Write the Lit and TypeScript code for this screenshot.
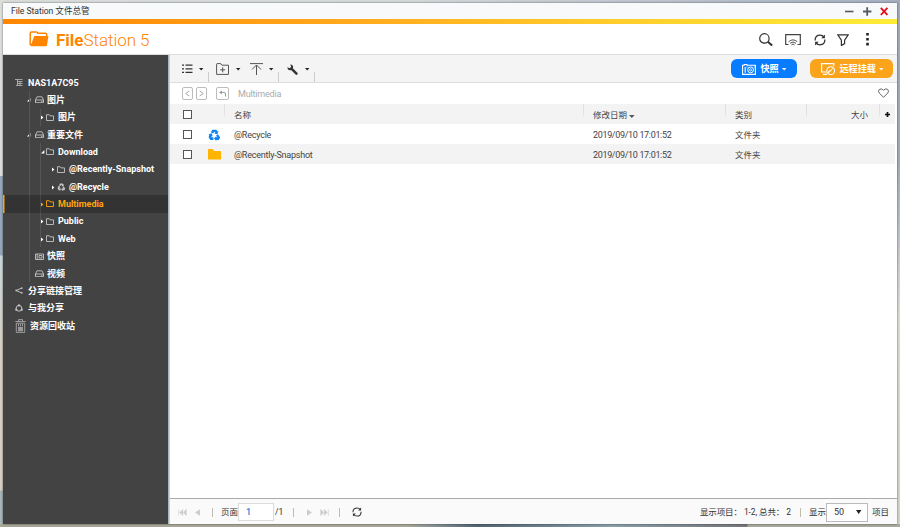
import { LitElement, html, svg, css } from "lit";
import { customElement } from "lit/decorators.js";
import { classMap } from "lit/directives/class-map.js";

const icons: Record<string, any> = {
  brand: svg`<path d="M1.2 14V2.6Q1.2 1 2.8 1h4.6q1 0 1.4 1.2h7.4q1.5 0 1.5 1.5V5" fill="none" stroke="#ff8500" stroke-width="1.5"/><path d="M5.2 5H19.4L18 14.3Q17.8 15.2 17 15.2H2.2Q1 15.2 1.2 13.8L2.6 12.5Z" fill="#ff8500"/>`,
  nas: svg`<path d="M0 .5H7.5M2 2.5H7.5M2 4.5H7.5M1 6.5H7.5M2.5 .5V6.5M5 2.5V6.5" stroke="#bbb" stroke-width=".8" fill="none"/>`,
  disk: svg`<path d="M.5 6.5V4L2 .8H7L8.5 4V6.7H.5V4H8.5M6 5.4H7.5" fill="none" stroke="#c4c4c4" stroke-width=".9"/>`,
  folder: svg`<path d="M.5 6.5V.7H3.2L4 1.9H7.5V6.5Z" fill="none" stroke="currentColor" stroke-width=".9"/>`,
  cam: svg`<path d="M.5 6.5V1H8.5V6.5ZM2.2 1V6.5M4 2.5H7V5H4Z" fill="none" stroke="#c4c4c4" stroke-width=".9"/>`,
  share: svg`<path d="M6.8 1L1.2 3.5L6.8 6" fill="none" stroke="#ccc" stroke-width=".9"/><path d="M6 .4h1.6v1.4H6zM.4 2.8H2v1.4H.4zM6 5.2h1.6v1.4H6z" fill="#ccc"/>`,
  shared: svg`<circle cx="4" cy="4.3" r="2.9" fill="none" stroke="#ccc" stroke-width=".9"/><circle cx="4" cy="1.4" r="1.1" fill="#ccc"/><circle cx="1.3" cy="5.7" r="1.1" fill="#ccc"/><circle cx="6.7" cy="5.7" r="1.1" fill="#ccc"/>`,
  trash: svg`<path d="M.3 2.5H10.7M3.5 2.3V.6H7.5V2.3M1.3 4.2H9.7V13.4H1.3ZM3.5 4.8V7.2M5.5 4.8V7.2M7.5 4.8V7.2" fill="none" stroke="#a6a6a6" stroke-width=".9"/><path d="M3 7.8H8V12.3H3Z" fill="#999"/>`,
  recycle: svg`<path d="M4.6 .8H9L10.3 2.9L11.5 2.3L10.2 6L6.6 5.1L7.9 4.4L6.9 2.9L5.5 5L2.8 3.6ZM10.9 5.9L13.4 9.6L11.7 12.3H9V13.4L6.4 10.8L9 8.2V9.4H10.3L8.7 7.2ZM1.2 6.4L.3 5.8L3.8 4.9L5 8.4L3.9 7.9L3.3 9.4H5.8V12.3H2.3L.4 9.4Z" fill="currentColor"/>`,
  list: svg`<path d="M0 1.2H2M0 4.8H2M0 8.4H2M3.5 1.2H10.5M3.5 4.8H10.5M3.5 8.4H10.5" stroke="#333" stroke-width="1.3"/>`,
  newf: svg`<path d="M.6 10.9V1.2Q.6 .6 1.2 .6H4.8L5.8 2.2H12.5V11.4H.6V10.9M6.7 4.3V9.3M4.2 6.8H9.2" fill="none" stroke="#555" stroke-width="1"/>`,
  upload: svg`<path d="M0 .6H13M6.5 12V2M2 6.5L6.5 2L11 6.5" fill="none" stroke="#555" stroke-width="1"/>`,
  wrench: svg`<path d="M3.2 .4L4.2 2.8L2.8 4.2L.4 3.2Q.3 5.5 2.2 6.2Q3.2 6.5 4 6L8.6 10.6Q9.4 11.3 10.3 10.5Q11 9.6 10.4 8.8L5.8 4.2Q6.6 2.8 5.6 1.4Q4.8 .3 3.2 .4Z" fill="#333"/>`,
  search: svg`<circle cx="5.4" cy="5.4" r="4.7" fill="none" stroke="#333" stroke-width="1.2"/><path d="M8.8 8.8L13.2 12.6" stroke="#333" stroke-width="2"/>`,
  cast: svg`<path d="M3.5 10.5H.7V.7H15.3V10.5H12.5" fill="none" stroke="#444" stroke-width="1.2"/><path d="M3.7 7.7Q8 4 12.3 7.7M5 9.3Q8 6.7 11 9.3M6.5 10.8Q8 9.3 9.5 10.8" fill="none" stroke="#555" stroke-width="1"/>`,
  sync: svg`<path d="M1.1 6.4Q1.2 1.1 6 1.1Q8.5 1.1 10 3M10.9 5.6Q10.8 10.9 6 10.9Q3.5 10.9 2 9" fill="none" stroke="#333" stroke-width="1.3"/><path d="M10.9 .6V4.2H7.3ZM1.1 11.4V7.8H4.7Z" fill="#333"/>`,
  filter: svg`<path d="M.8 .8H11.2L7.6 6.2V9.6L4.4 11.6V6.2Z" fill="none" stroke="#333" stroke-width="1.2"/>`,
  dots: svg`<path d="M.2 0h2.6v2.6H.2zM.2 4.9h2.6v2.6H.2zM.2 9.8h2.6v2.6H.2z" fill="#222"/>`,
  snap: svg`<path d="M.6 10.4V1.3H2.3V.5H5V1.3H13.4V10.4ZM3.2 3V8.8" fill="none" stroke="#fff" stroke-width="1.1"/><circle cx="8.6" cy="5.9" r="2.9" fill="none" stroke="#fff"/><circle cx="8.6" cy="5.9" r="1.1" fill="none" stroke="#fff" stroke-width=".8"/><path d="M11.7 2.4h1v1h-1zM4.5 2.4h1v1h-1z" fill="#fff"/>`,
  mount: svg`<path d="M5.3 9H.6V.6H12.8V3.3M2 11.4H6" fill="none" stroke="#fff" stroke-width="1.2"/><circle cx="9.7" cy="7.7" r="3.9" fill="none" stroke="#fff" stroke-width="1.1"/><path d="M7.6 9.8L12 5.2M7.6 9.8Q7 7.7 9.2 7.7H10.3" fill="none" stroke="#fff"/>`,
  left: svg`<rect x=".5" y=".5" width="10" height="12" rx="1.5" fill="none" stroke="#bbb"/><path d="M7.3 4L3.7 6.5L7.3 9" fill="none" stroke="#aaa"/>`,
  right: svg`<rect x=".5" y=".5" width="10" height="12" rx="1.5" fill="none" stroke="#bbb"/><path d="M3.7 4L7.3 6.5L3.7 9" fill="none" stroke="#aaa"/>`,
  up: svg`<rect x=".5" y=".5" width="12" height="12" rx="1.5" fill="none" stroke="#bbb"/><path d="M6 3.2V7.6L3 5.4Z" fill="#aaa"/><path d="M4 5.4H8Q9.5 5.4 9.5 7V9.5" fill="none" stroke="#999"/>`,
  heart: svg`<path d="M5.5 9.3L1.2 5Q-.2 3.2 1.2 1.5Q3.3-.2 5.5 2.2Q7.7-.2 9.8 1.5Q11.2 3.2 9.8 5Z" fill="none" stroke="#666" stroke-width="1"/>`,
  ffolder: svg`<path d="M0 .8Q0 0 .8 0H4.7L6.2 1.9H12.2Q13 1.9 13 2.7V10.5H0Z" fill="#ffb400"/>`,
  first: svg`<path d="M.6 0V7M4.7 .5L1.7 3.5L4.7 6.5ZM8.3 .5L5.3 3.5L8.3 6.5Z" fill="#ccc" stroke="#ccc" stroke-width=".6"/>`,
  prev: svg`<path d="M5 .3V6.7L0 3.5Z" fill="#ccc"/>`,
  next: svg`<path d="M0 .3V6.7L5 3.5Z" fill="#ccc"/>`,
  last: svg`<path d="M8.4 0V7M4.3 .5L7.3 3.5L4.3 6.5ZM.7 .5L3.7 3.5L.7 6.5Z" fill="#ccc" stroke="#ccc" stroke-width=".6"/>`,
  min: svg`<path d="M0 4.5H8.5" stroke="#555a63" stroke-width="1.6"/>`,
  max: svg`<path d="M0 4.5H8.4M4.2 .3V8.7" stroke="#555a63" stroke-width="1.8"/>`,
  close: svg`<path d="M.8 .8L7.4 8M7.4 .8L.8 8" stroke="#e80c14" stroke-width="1.8"/>`,
  caret: svg`<path d="M0 0H4.4L2.2 2.6Z" fill="#222"/>`,
  wcaret: svg`<path d="M0 0H4.4L2.2 2.6Z" fill="#fff"/>`,
  sort: svg`<path d="M0 0H5.6L2.8 3Z" fill="#555"/>`,
  drop: svg`<path d="M0 0H5.4L2.7 4Z" fill="#222"/>`,
  plus: svg`<path d="M2.5 0V5M0 2.5H5" stroke="#111" stroke-width="1.7"/>`,
  open: svg`<path d="M3.4 0V3.4H0Z" fill="#fff"/>`,
  shut: svg`<path d="M0 .4L2.4 2.4L0 4.4Z" fill="currentColor"/>`,
};
const icon = (n: string, w: number, h: number, vb = `0 0 ${w} ${h}`) =>
  html`<svg width=${w} height=${h} viewBox=${vb}>${icons[n]}</svg>`;

interface Node { label: string; level: number; icon: string; arrow?: string; sel?: boolean; lines?: number }
const tree: Node[] = [
  { label: "NAS1A7C95", level: 0, icon: "nas" },
  { label: "图片", level: 1, icon: "disk", arrow: "open", lines: 1 },
  { label: "图片", level: 2, icon: "folder", arrow: "shut", lines: 2 },
  { label: "重要文件", level: 1, icon: "disk", arrow: "open", lines: 1 },
  { label: "Download", level: 2, icon: "folder", arrow: "open", lines: 2 },
  { label: "@Recently-Snapshot", level: 3, icon: "folder", arrow: "shut", lines: 2 },
  { label: "@Recycle", level: 3, icon: "recycle", arrow: "shut", lines: 2 },
  { label: "Multimedia", level: 2, icon: "folder", arrow: "shut", sel: true, lines: 2 },
  { label: "Public", level: 2, icon: "folder", arrow: "shut", lines: 2 },
  { label: "Web", level: 2, icon: "folder", arrow: "shut", lines: 2 },
  { label: "快照", level: 1, icon: "cam", lines: 1 },
  { label: "视频", level: 1, icon: "disk", lines: 1 },
  { label: "分享链接管理", level: 0, icon: "share" },
  { label: "与我分享", level: 0, icon: "shared" },
  { label: "资源回收站", level: 0, icon: "trash" },
];

@customElement("nav-tree")
class NavTree extends LitElement {
  static styles = css`
    :host { display: block; padding-top: 18.8px; background: #434343; color: #fff; }
    svg { display: block; flex: none; }
    .node { position: relative; display: flex; align-items: center; height: 17.36px; box-sizing: border-box; font-weight: 700; font-size: 9px; white-space: nowrap; }
    .label { padding-top: 1px; }
    .l0 { padding-left: 12px; } .l1 { padding-left: 24px; } .l2 { padding-left: 36px; } .l3 { padding-left: 47px; }
    .sel { background: #333; color: #fda50f; box-shadow: inset 1.5px 0 #fda50f; }
    .arrow { width: 7px; flex: none; display: flex; justify-content: center; padding-top: 1px; }
    .l0 .arrow { display: none; }
    .l1 .arrow { justify-content: flex-start; }
    .l1 .ico { padding-left: 1px; box-sizing: border-box; }
    .ico { width: 12px; flex: none; color: #c4c4c4; }
    .l1 .ico { width: 13px; }
    .l0 .ico { width: 13px; }
    .l0 .wide { width: 15px; }
    .sel .ico { color: #fda50f; }
    .g1::before, .g2::before, .g2::after { content: ""; position: absolute; top: 0; bottom: 0; left: 26px; width: 1px; background: #555; }
    .g2::after { left: 37px; }
    .sel.g2::before, .sel.g2::after { opacity: .6; }
  `;
  ico(n: string) {
    if (n === "recycle") return icon(n, 9, 8, "0 0 14 13.5");
    if (n === "trash") return icon(n, 11, 14);
    if (n === "disk" || n === "cam") return icon(n, 9, 7);
    if (n === "shared") return icon(n, 8, 8);
    return icon(n, 8, 7);
  }
  render() {
    return tree.map((t) => html`<div class=${classMap({ node: true, [`l${t.level}`]: true, [`g${t.lines ?? 0}`]: true, sel: !!t.sel })}>
      <span class="arrow">${t.arrow === "open" ? icon("open", 4, 4) : t.arrow ? icon("shut", 3, 5) : ""}</span>
      <span class=${classMap({ ico: true, wide: t.icon === "trash" })}>${this.ico(t.icon)}</span>
      <span class="label">${t.label}</span></div>`);
  }
}

@customElement("file-table")
class FileTable extends LitElement {
  static styles = css`
    :host { display: block; flex: 1; padding-right: 2px; font-size: 8.5px; color: #444; }
    svg { display: block; }
    .row { display: grid; grid-template-columns: 34px 21px 359px 142px 81px 73px 1fr; height: 20px; align-items: center; }
    .alt { height: 20px; background: #f3f3f3; }
    .row > * { padding-left: 9px; }
    .row > .txt { padding-top: 2px; }
    .head { background: #f3f3f3; align-items: stretch; }
    .head > * { display: flex; align-items: center; background: linear-gradient(#ddd, #e3e3e3 70%, transparent) right top / 1px 14px no-repeat; padding-top: 2px; }
    .head > :first-child, .head > :last-child { background: none; padding-top: 0; }
    .head .size { justify-content: flex-end; padding-right: 12px; padding-left: 0; }
    .head .add { padding-left: 5px; padding-top: 1px; }
    .row > .check { padding-left: 13px; }
    .box { display: block; width: 9px; height: 9px; box-sizing: border-box; border: 1px solid #555; background: #fff; }
    .row > .ic { padding-left: 4px; padding-top: 1px; color: #0b84f5; }
    .sort { margin-left: 2px; padding-top: 2px; }
    .latin { font-size: 9px; letter-spacing: -.23px; }
    .date { font-size: 9px; letter-spacing: -.34px; }
  `;
  row(name: string, ic: unknown, alt: boolean) {
    return html`<div class=${classMap({ row: true, alt })}><span class="check"><i class="box"></i></span><span class="ic">${ic}</span>
      <span class="txt latin">${name}</span><span class="txt date">2019/09/10 17:01:52</span><span class="txt">文件夹</span></div>`;
  }
  render() {
    return html`<div class="row head"><span class="check"><i class="box"></i></span><span></span><span>名称</span>
      <span>修改日期<i class="sort">${icon("sort", 6, 3)}</i></span><span>类别</span><span class="size">大小</span><span class="add">${icon("plus", 5, 5)}</span></div>
      ${this.row("@Recycle", icon("recycle", 13, 12, "0 0 14 13.5"), false)}
      ${this.row("@Recently-Snapshot", icon("ffolder", 13, 11), true)}`;
  }
}

@customElement("app-root")
class AppRoot extends LitElement {
  static styles = css`
    :host { display: block; box-sizing: border-box; width: 900px; height: 527px; padding: 3px 3px 3px 3px; overflow: hidden; font-family: Roboto, "Noto Sans CJK SC", sans-serif; font-size: 9px; line-height: 1.2; color: #444;
      background:
        linear-gradient(90deg, #a9a798 0 45%, #8b9496 48%, #526675 53%, #8aa0aa 68%, #77777c 83%, #aaa99e 83.1%) 0 524px / 900px 3px no-repeat,
        linear-gradient(#a3aabc 0, #a3aabc 30%, #c9cfd2 50%, #dddcd2 60%, #d5d3c8 100%) 897px 0 / 3px 527px no-repeat,
        linear-gradient(#dcdfdb 0 176px, #98a8ba 176px 255px, #ccd8dc 256px, #d6d2c6 340px 490px, #a9b7ba 491px) 0 0 / 3px 527px no-repeat,
        linear-gradient(90deg, #dadedb, #d4d9da 45%, #a7b0c2); }
    svg { display: block; flex: none; }
    .win { display: flex; flex-direction: column; height: 521px; box-sizing: border-box; background: #fff; box-shadow: 0 0 2px rgba(0,0,0,.55); }
    .title { height: 16px; display: flex; align-items: center; padding: 1px 9px 0 8px; box-sizing: border-box; background: #f8f9fb; color: #333; font-size: 8.6px; }
    .title span, .brand { flex: 1; }
    .title span { letter-spacing: -.04px; }
    .wb { display: flex; gap: 8.5px; }
    .strip { height: 5px; background: linear-gradient(90deg, #ff8500, #ffa51a 35%, #ffcb2b 67%, #ffec37); }
    .header { height: 31px; box-sizing: border-box; border-bottom: 1px solid #ddd; display: flex; align-items: center; padding: 1px 28px 0 26px; }
    .brand { display: flex; align-items: center; gap: 7px; color: #ff8500; font-size: 17px; letter-spacing: -.03px; font-weight: 300; }
    .brand div { padding-top: 1px; }
    .brand b { font-weight: 700; }
    .tools { display: flex; align-items: center; }
    .tools svg:nth-child(2) { margin-left: 12px; } .tools svg:nth-child(3) { margin-left: 13px; }
    .tools svg:nth-child(4) { margin-left: 11px; } .tools svg:nth-child(5) { margin-left: 17px; }
    .body { flex: 1; display: flex; min-height: 0; }
    nav-tree { width: 165px; box-sizing: border-box; }
    .split { width: 2px; background: linear-gradient(90deg, #9ba9b1, #d4e1e8); }
    main { flex: 1; display: flex; flex-direction: column; min-width: 0; }
    .toolbar { height: 28px; box-sizing: border-box; border-bottom: 1px solid #ddd; background: #f4f4f4; display: flex; align-items: center; padding: 0 4px 0 12px; }
    .tool { display: flex; align-items: center; height: 27px; justify-content: space-between; padding: 1px 5px 0 0; box-sizing: border-box; background: linear-gradient(#ccc, #ccc) right 17px / 1px 10px no-repeat; }
    .t1 { width: 27px; } .t2 { width: 30px; margin-left: 7px; background: none; } .t3 { width: 29px; margin-left: 4px; } .t4 { width: 28px; margin-left: 8px; }
    .grow { flex: 1; }
    .pill { height: 19px; box-sizing: border-box; border-radius: 6px; color: #fff; font-weight: 700; font-size: 9.1px; display: flex; align-items: center; padding: 1px 0 0 11px; background: #087cff; gap: 4.5px; white-space: nowrap; }
    .pill svg:last-child { margin-left: -1.5px; }
    .snap { width: 66px; } .mount { width: 83px; margin-left: 13px; background: #fba31a; }
    .path { height: 21px; display: flex; align-items: center; padding: 0 8px 0 12px; color: #aaa; box-sizing: border-box; letter-spacing: -.17px; }
    .path .here { padding-top: 1px; }
    .path svg + svg { margin-left: 3px; } .path .up { margin: 0 9px; }
    .path .fav { padding-bottom: 1px; }
    .foot { height: 26px; box-sizing: border-box; border-top: 1px solid #aaa; background: #fafafa; display: flex; align-items: center; padding: 1px 8px 0 8px; font-size: 8.5px; color: #333; white-space: pre; }
    .bar { width: 1px; height: 9px; background: #bcbcac; }
    .page { width: 36px; height: 18px; box-sizing: border-box; border: 1px solid #ddd; background: #fff; color: #1584dd; padding-left: 7px; line-height: 17px; font-size: 9px; font-weight: 500; }
    .sel { width: 42px; height: 19px; box-sizing: border-box; border: 1px solid #bbb; background: #fff; display: flex; align-items: center; justify-content: space-between; padding: 0 5px 0 7px; font-size: 9px; }
    .m0 { margin-left: 1px; } .m1 { margin-left: 8px; } .m2 { margin-left: 12px; } .m3 { margin-left: 10px; } .m4 { margin-left: 4px; } .m5 { margin-left: 9px; }
    .count { letter-spacing: -.1px; }
    .next { margin-left: 13px; }
  `;
  render() {
    return html`<div class="win">
      <div class="title"><span>File Station 文件总管</span><div class="wb">${icon("min", 9, 9)}${icon("max", 9, 9)}${icon("close", 8, 9)}</div></div>
      <div class="strip"></div>
      <div class="header"><div class="brand">${icon("brand", 20, 16)}<div><b>File</b>Station 5</div></div>
        <div class="tools">${icon("search", 14, 13)}${icon("cast", 16, 12)}${icon("sync", 12, 12)}${icon("filter", 12, 12)}${icon("dots", 3, 13)}</div></div>
      <div class="body"><nav-tree></nav-tree><div class="split"></div>
        <main>
          <div class="toolbar">
            <div class="tool t1">${icon("list", 11, 10)}${icon("caret", 5, 3)}</div>
            <div class="tool t2">${icon("newf", 13, 12)}${icon("caret", 5, 3)}</div>
            <div class="tool t3">${icon("upload", 13, 12)}${icon("caret", 5, 3)}</div>
            <div class="tool t4">${icon("wrench", 11, 11)}${icon("caret", 5, 3)}</div>
            <div class="grow"></div>
            <div class="pill snap">${icon("snap", 14, 11)}<span>快照</span>${icon("wcaret", 5, 3)}</div>
            <div class="pill mount">${icon("mount", 14, 12)}<span>远程挂载</span>${icon("wcaret", 5, 3)}</div>
          </div>
          <div class="path">${icon("left", 11, 13)}${icon("right", 11, 13)}<span class="up">${icon("up", 13, 13)}</span><span class="here">Multimedia</span><div class="grow"></div><span class="fav">${icon("heart", 11, 10)}</span></div>
          <file-table></file-table>
          <div class="foot">${icon("first", 9, 7)}<span class="m1">${icon("prev", 5, 7)}</span><i class="bar m2"></i><span class="m1">页面</span><span class="page">1</span><span class="m0">/1</span><i class="bar m3"></i><span class="next">${icon("next", 5, 7)}</span><span class="m1">${icon("last", 9, 7)}</span><i class="bar m3"></i><span class="m2">${icon("sync", 10, 10, "0 0 12 12")}</span>
            <div class="grow"></div><span class="count">显示项目： 1-2, 总共： 2</span><i class="bar m5"></i><span class="m1">显示</span><span class="sel">50${icon("drop", 6, 4)}</span><span class="m4">项目</span></div>
        </main></div></div>`;
  }
}
